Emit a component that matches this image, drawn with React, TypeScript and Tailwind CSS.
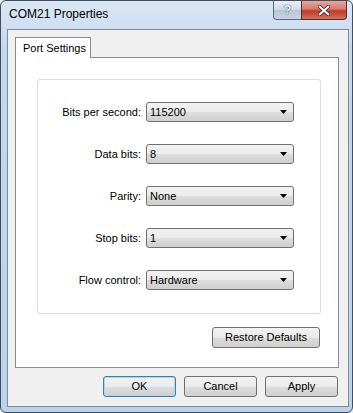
import React from 'react';

const rows = [
  { label: 'Bits per second:', value: '115200' },
  { label: 'Data bits:', value: '8' },
  { label: 'Parity:', value: 'None' },
  { label: 'Stop bits:', value: '1' },
  { label: 'Flow control:', value: 'Hardware' },
];

const Combo: React.FC<{ value: string }> = ({ value }) => (
  <div className="flex h-[20px] w-[148px] items-center justify-between rounded-[3px] border border-[#707070] bg-[linear-gradient(#f2f2f2,#ebebeb_50%,#dddddd_50%,#cfcfcf)] pl-[3px] pr-[6px]">
    <span className="leading-none">{value}</span>
    <svg width="7" height="4" viewBox="0 0 7 4">
      <path d="M0 0h7L3.5 4z" fill="#000" />
    </svg>
  </div>
);

const Button: React.FC<{ label: string; primary?: boolean; className?: string }> = ({ label, primary, className }) => (
  <div
    className={
      'flex h-[21px] items-center justify-center rounded-[3px] border bg-[linear-gradient(#f2f2f2,#ebebeb_50%,#dddddd_50%,#cfcfcf)] ' +
      (primary ? 'border-[#3c7fb1] shadow-[inset_0_0_0_1px_#a8d8f0] ' : 'border-[#707070] ') +
      (className ?? '')
    }
  >
    {label}
  </div>
);

export default function App() {
  return (
    <div className="h-[413px] w-[353px] bg-[#e8eef5] font-['Liberation_Sans',Arial,sans-serif] text-[11px] text-black">
      <div className="flex h-[413px] w-[353px] flex-col rounded-[6px] border border-[#3d4e62] bg-[linear-gradient(180deg,#dbe7f4_0%,#c4d8ee_12%,#bcd2eb_100%)] pb-[5px] pl-[6px] pr-[3px]">
        {/* title bar */}
        <div className="flex h-[28px] items-start justify-between">
          <div className="pl-[2px] pt-[7px] text-[12px] leading-none">COM21 Properties</div>
          <div className="mr-[2px] flex h-[19px]">
            <div className="flex w-[28px] items-center justify-center rounded-bl-[4px] border border-t-0 border-r-0 border-[#5a6b7f] bg-[linear-gradient(#e8eef5,#cfd9e6_50%,#b8c6d8_50%,#c8d4e2)] text-[13px] font-bold text-white [text-shadow:0_0_1px_#2a3a4d,0_0_1px_#2a3a4d]">
              ?
            </div>
            <div className="flex w-[46px] items-center justify-center rounded-br-[4px] border border-t-0 border-[#5a2a2a] bg-[linear-gradient(#e6a99c,#d47a6b_45%,#c0392b_55%,#d9705f)]">
              <svg width="12" height="11" viewBox="0 0 12 11">
                <path d="M1.5 1.5l9 8M10.5 1.5l-9 8" stroke="#3b1c1c" strokeWidth="3.6" strokeLinecap="round" />
                <path d="M1.5 1.5l9 8M10.5 1.5l-9 8" stroke="#fff" strokeWidth="2" strokeLinecap="round" />
              </svg>
            </div>
          </div>
        </div>

        {/* client area */}
        <div className="flex flex-1 flex-col border border-[#7b8a9c] bg-[#f0f0f0] pl-[7px] pr-[9px] pt-[7px]">
          <div className="flex">
            <div className="relative z-10 -mb-px flex h-[21px] w-[76px] items-center border border-b-0 border-[#898c95] bg-white pl-[7px]">
              Port Settings
            </div>
          </div>
          <div className="flex h-[311px] flex-col border border-[#898c95] bg-white pl-[21px] pr-[17px] pt-[21px]">
            <div className="flex h-[235px] flex-col gap-[22px] rounded-[3px] border border-[#d5dfe5] pt-[22px]">
              {rows.map((r) => (
                <div key={r.label} className="flex items-center">
                  <div className="w-[108px] pr-[5px] text-right">{r.label}</div>
                  <Combo value={r.value} />
                </div>
              ))}
            </div>
            <div className="mt-[13px] flex justify-end pr-px">
              <Button label="Restore Defaults" className="h-[20px] w-[108px]" />
            </div>
          </div>
          <div className="mt-[8px] flex justify-end gap-[8px] pr-[1px]">
            <Button label="OK" primary className="w-[73px]" />
            <Button label="Cancel" className="w-[73px]" />
            <Button label="Apply" className="w-[73px]" />
          </div>
        </div>
      </div>
    </div>
  );
}
